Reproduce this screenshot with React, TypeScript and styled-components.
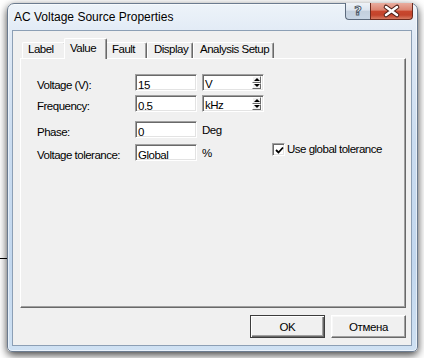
import React from "react";
import styled, { createGlobalStyle } from "styled-components";

interface ITab {
  label: string;
  width: number;
  pad: number;
}

const tabs: ITab[] = [
  { label: "Label", width: 44, pad: 5 },
  { label: "Value", width: 39, pad: 5 },
  { label: "Fault", width: 42, pad: 6 },
  { label: "Display", width: 46, pad: 6 },
  { label: "Analysis Setup", width: 81, pad: 6 },
];

const activeTab = "Value";

const Spinner: React.FC<{ value: string }> = ({ value }) => (
  <SpinField>
    <SpinText>{value}</SpinText>
    <SpinButtons>
      <SpinButton>
        <ArrowUp />
      </SpinButton>
      <SpinButton>
        <ArrowDown />
      </SpinButton>
    </SpinButtons>
  </SpinField>
);

const App: React.FC = () => {
  return (
    <Desktop>
      <GlobalStyle />
      <WireLine />
      <Window>
        <TitleBar>
          <Title>AC Voltage Source Properties</Title>
          <CaptionButtons>
            <HelpButton>?</HelpButton>
            <CloseButton>
              <svg width="41" height="16" viewBox="0 0 41 16">
                <path
                  d="M15 4 L26 12 M26 4 L15 12"
                  stroke="#4a1e16"
                  strokeWidth="4.6"
                  strokeLinecap="round"
                />
                <path
                  d="M15 4 L26 12 M26 4 L15 12"
                  stroke="#ffffff"
                  strokeWidth="2.6"
                  strokeLinecap="round"
                />
              </svg>
            </CloseButton>
          </CaptionButtons>
        </TitleBar>
        <Client>
          <TabStrip>
            {tabs.map((tab) => (
              <Tab
                key={tab.label}
                $width={tab.width}
                $pad={tab.pad}
                $active={tab.label === activeTab}
              >
                {tab.label}
              </Tab>
            ))}
          </TabStrip>
          <Panel>
            <Row $gap={0}>
              <FieldLabel>Voltage (V):</FieldLabel>
              <TextField>15</TextField>
              <UnitCell>
                <Spinner value="V" />
              </UnitCell>
            </Row>
            <Row $gap={4}>
              <FieldLabel>Frequency:</FieldLabel>
              <TextField>0.5</TextField>
              <UnitCell>
                <Spinner value="kHz" />
              </UnitCell>
            </Row>
            <Row $gap={9}>
              <FieldLabel>Phase:</FieldLabel>
              <TextField>0</TextField>
              <UnitCell>
                <UnitText>Deg</UnitText>
              </UnitCell>
            </Row>
            <Row $gap={6}>
              <FieldLabel>Voltage tolerance:</FieldLabel>
              <TextField>Global</TextField>
              <UnitCell>
                <UnitText>%</UnitText>
              </UnitCell>
              <CheckRow>
                <CheckBox>
                  <svg width="9" height="9" viewBox="0 0 9 9">
                    <path
                      d="M1 4 L3.5 6.5 L8 1.5"
                      stroke="#000"
                      strokeWidth="1.8"
                      fill="none"
                    />
                  </svg>
                </CheckBox>
                <CheckText>Use global tolerance</CheckText>
              </CheckRow>
            </Row>
          </Panel>
          <ButtonRow>
            <DialogButton $default>OK</DialogButton>
            <DialogButton>Отмена</DialogButton>
          </ButtonRow>
        </Client>
      </Window>
    </Desktop>
  );
};

const GlobalStyle = createGlobalStyle`
  html, body {
    margin: 0;
    padding: 0;
    background: #ffffff;
  }
  body {
    font-family: "Liberation Sans", Arial, sans-serif;
  }
`;

const Desktop = styled.div`
  position: relative;
  width: 424px;
  height: 358px;
  box-sizing: border-box;
  padding: 3px 0 0 7px;
  overflow: hidden;
  background: #ffffff;
`;

const WireLine = styled.div`
  position: absolute;
  left: 0;
  top: 258px;
  width: 8px;
  height: 1px;
  background: #000;
`;

const Window = styled.div`
  position: relative;
  width: 411px;
  height: 349px;
  box-sizing: border-box;
  display: flex;
  flex-direction: column;
  border: 1px solid #6b7b8f;
  border-radius: 7px 7px 5px 5px;
  background: linear-gradient(
    180deg,
    #edf3f9 0%,
    #dfe9f5 10%,
    #cadcf0 40%,
    #c2d7ee 75%,
    #cfe1f3 100%
  );
  box-shadow: 0 3px 9px rgba(0, 0, 0, 0.75),
    inset 0 0 0 1px rgba(255, 255, 255, 0.55);
`;

const TitleBar = styled.div`
  display: flex;
  align-items: flex-start;
  height: 26px;
  padding: 0 4px 0 6px;
`;

const Title = styled.div`
  flex: 1;
  font-size: 12px;
  line-height: 26px;
  color: #000;
  text-shadow: 0 0 6px rgba(255, 255, 255, 0.9);
`;

const CaptionButtons = styled.div`
  display: flex;
  margin-top: -1px;
`;

const HelpButton = styled.div`
  width: 25px;
  height: 17px;
  box-sizing: border-box;
  border: 1px solid #5d6b7d;
  border-top: none;
  border-right: none;
  border-radius: 0 0 0 4px;
  background: linear-gradient(
    180deg,
    #eef2f7 0%,
    #dde5ef 45%,
    #c3cfdd 50%,
    #c9d6e5 100%
  );
  text-align: center;
  font-family: "DejaVu Sans", sans-serif;
  font-weight: bold;
  font-size: 13px;
  line-height: 16px;
  color: #ffffff;
  -webkit-text-stroke: 1px #4c5968;
`;

const CloseButton = styled.div`
  width: 43px;
  height: 17px;
  box-sizing: border-box;
  border: 1px solid #6e2b1e;
  border-top: none;
  border-radius: 0 0 4px 0;
  background: linear-gradient(
    180deg,
    #e9ad9f 0%,
    #dc8470 45%,
    #c9472e 50%,
    #c3432b 75%,
    #d77b62 100%
  );
  display: flex;
  align-items: center;
`;

const Client = styled.div`
  flex: 1;
  margin: 0 5px 5px 4px;
  display: flex;
  flex-direction: column;
  padding: 7px 5px 7px 7px;
  border: 1px solid #8c9fb5;
  background: #f0f0f0;
  font-size: 11.5px;
  letter-spacing: -0.5px;
  color: #000;
`;

const TabStrip = styled.div`
  position: relative;
  z-index: 1;
  display: flex;
  align-items: flex-end;
  height: 20px;
  padding-left: 2px;
`;

const Tab = styled.div<{ $width: number; $pad: number; $active: boolean }>`
  position: relative;
  box-sizing: border-box;
  width: ${({ $width, $active }) => ($active ? $width + 4 : $width)}px;
  height: ${({ $active }) => ($active ? 21 : 16)}px;
  margin: ${({ $active }) => ($active ? "0 -2px -1px" : "0")};
  z-index: ${({ $active }) => ($active ? 2 : 1)};
  padding: ${({ $active, $pad }) =>
    $active ? `3px 0 0 ${$pad}px` : `0 0 0 ${$pad}px`};
  border: 1px solid;
  border-color: #ffffff #696969 transparent #ffffff;
  border-bottom: none;
  border-radius: 2px 2px 0 0;
  box-shadow: inset -1px 0 0 #a0a0a0;
  background: #f0f0f0;
  line-height: 13px;
  white-space: nowrap;
`;

const Panel = styled.div`
  height: 250px;
  box-sizing: border-box;
  padding: 15px 0 0 16px;
  border: 1px solid;
  border-color: #ffffff #696969 #696969 #ffffff;
  box-shadow: inset -1px -1px 0 #a0a0a0;
`;

const Row = styled.div<{ $gap: number }>`
  display: flex;
  align-items: flex-start;
  height: 17px;
  margin-top: ${({ $gap }) => $gap}px;
`;

const FieldLabel = styled.div`
  width: 98px;
  line-height: 13px;
  padding-top: 5px;
  white-space: nowrap;
`;

const Sunken = styled.div`
  box-sizing: border-box;
  height: 17px;
  width: 62px;
  border: 1px solid;
  border-color: #a0a0a0 #ffffff #ffffff #a0a0a0;
  box-shadow: inset 1px 1px 0 #696969, inset -1px -1px 0 #e3e3e3;
  background: #ffffff;
`;

const TextField = styled(Sunken)`
  padding: 4px 0 0 2px;
  line-height: 13px;
  white-space: nowrap;
`;

const UnitCell = styled.div`
  width: 62px;
  margin-left: 5px;
`;

const UnitText = styled.div`
  line-height: 13px;
  padding-top: 3px;
`;

const SpinField = styled(Sunken)`
  display: flex;
  padding: 1px;
`;

const SpinText = styled.div`
  flex: 1;
  padding: 2px 0 0 1px;
  line-height: 13px;
`;

const SpinButtons = styled.div`
  display: flex;
  flex-direction: column;
  width: 9px;
  margin-right: 1px;
`;

const SpinButton = styled.div`
  flex: 1;
  box-sizing: border-box;
  display: flex;
  align-items: center;
  justify-content: center;
  border: 1px solid;
  border-color: #ffffff #696969 #696969 #ffffff;
  background: #f0f0f0;
`;

const ArrowUp = styled.div`
  width: 0;
  height: 0;
  border-left: 3px solid transparent;
  border-right: 3px solid transparent;
  border-bottom: 3px solid #000;
`;

const ArrowDown = styled.div`
  width: 0;
  height: 0;
  border-left: 3px solid transparent;
  border-right: 3px solid transparent;
  border-top: 3px solid #000;
`;

const CheckRow = styled.div`
  display: flex;
  align-items: center;
  margin: -1px 0 0 8px;
  height: 13px;
`;

const CheckBox = styled.div`
  box-sizing: border-box;
  width: 13px;
  height: 13px;
  border: 1px solid;
  border-color: #a0a0a0 #ffffff #ffffff #a0a0a0;
  box-shadow: inset 1px 1px 0 #696969, inset -1px -1px 0 #e3e3e3;
  background: #ffffff;
  display: flex;
  align-items: center;
  justify-content: center;
  padding: 1px 0 0 1px;
`;

const CheckText = styled.div`
  margin-left: 2px;
  line-height: 13px;
  white-space: nowrap;
`;

const ButtonRow = styled.div`
  display: flex;
  justify-content: flex-end;
  gap: 6px;
  margin-top: 7px;
`;

const DialogButton = styled.button<{ $default?: boolean }>`
  width: 75px;
  height: 23px;
  padding: 0;
  font-family: "Liberation Sans", Arial, sans-serif;
  font-size: 11.5px;
  letter-spacing: -0.4px;
  color: #000;
  background: #f0f0f0;
  border: 1px solid;
  border-color: ${({ $default }) =>
    $default ? "#3c3c3c" : "#ffffff #696969 #696969 #ffffff"};
  box-shadow: ${({ $default }) =>
    $default
      ? "inset 1px 1px 0 #ffffff, inset -1px -1px 0 #696969, inset -2px -2px 0 #a0a0a0"
      : "inset -1px -1px 0 #a0a0a0, inset 1px 1px 0 #f8f8f8"};
`;

export default App;
